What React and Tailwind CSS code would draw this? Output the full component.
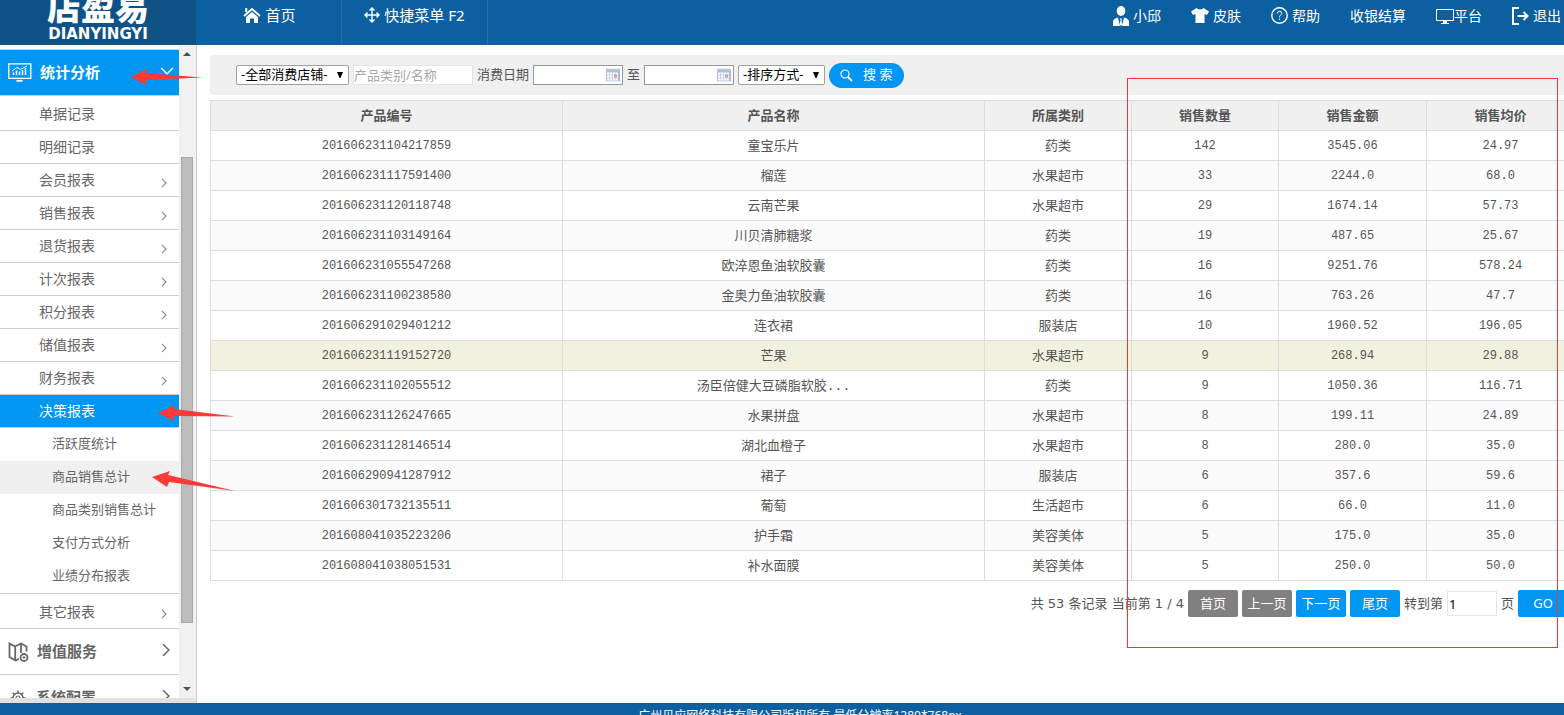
const MENU = [
  { label: '单据记录' },
  { label: '明细记录' },
  { label: '会员报表', more: true },
  { label: '销售报表', more: true },
  { label: '退货报表', more: true },
  { label: '计次报表', more: true },
  { label: '积分报表', more: true },
  { label: '储值报表', more: true },
  { label: '财务报表', more: true },
  {
    label: '决策报表',
    active: true,
    children: ['活跃度统计', '商品销售总计', '商品类别销售总计', '支付方式分析', '业绩分布报表'],
  },
]

const CURRENT = '商品销售总计'

const COLUMNS = [
  { label: '产品编号', width: 'w-[352px]' },
  { label: '产品名称', width: 'w-[422px]' },
  { label: '所属类别', width: 'w-[147px]' },
  { label: '销售数量', width: 'w-[147px]' },
  { label: '销售金额', width: 'w-[148px]' },
  { label: '销售均价', width: 'w-[148px]' },
]

const ROWS = [
  ['201606231104217859', '童宝乐片', '药类', '142', '3545.06', '24.97'],
  ['201606231117591400', '榴莲', '水果超市', '33', '2244.0', '68.0'],
  ['201606231120118748', '云南芒果', '水果超市', '29', '1674.14', '57.73'],
  ['201606231103149164', '川贝清肺糖浆', '药类', '19', '487.65', '25.67'],
  ['201606231055547268', '欧淬恩鱼油软胶囊', '药类', '16', '9251.76', '578.24'],
  ['201606231100238580', '金奥力鱼油软胶囊', '药类', '16', '763.26', '47.7'],
  ['201606291029401212', '连衣裙', '服装店', '10', '1960.52', '196.05'],
  ['201606231119152720', '芒果', '水果超市', '9', '268.94', '29.88'],
  ['201606231102055512', '汤臣倍健大豆磷脂软胶...', '药类', '9', '1050.36', '116.71'],
  ['201606231126247665', '水果拼盘', '水果超市', '8', '199.11', '24.89'],
  ['201606231128146514', '湖北血橙子', '水果超市', '8', '280.0', '35.0'],
  ['201606290941287912', '裙子', '服装店', '6', '357.6', '59.6'],
  ['201606301732135511', '葡萄', '生活超市', '6', '66.0', '11.0'],
  ['201608041035223206', '护手霜', '美容美体', '5', '175.0', '35.0'],
  ['201608041038051531', '补水面膜', '美容美体', '5', '250.0', '50.0'],
]

const HOVERED_ROW = 7

function Chevron({ className }) {
  return (
    <svg viewBox="0 0 12 12" fill="none" stroke="currentColor" className={className}>
      <path d="M3.500 1l5 5-5 5" strokeWidth="1.300" />
    </svg>
  )
}

function IconHome() {
  return (
    <svg width="18" height="17" viewBox="0 0 18 17" fill="none" stroke="#fff">
      <path d="M1 9l8-7 8 7" strokeWidth="2" />
      <path d="M3.200 1v4" strokeWidth="2" />
      <path d="M3 10l6-5 6 5v6h-4v-4.500H7V16H3z" fill="#fff" stroke="none" />
    </svg>
  )
}

function IconMove() {
  return (
    <svg width="16" height="16" viewBox="0 0 16 16" fill="none" stroke="#fff" strokeWidth="1.400">
      <path d="M8 1v14M1 8h14M5.500 3.500L8 1l2.500 2.500M5.500 12.500L8 15l2.500-2.500M3.500 5.500L1 8l2.500 2.500M12.500 5.500L15 8l-2.500 2.500" />
    </svg>
  )
}

function IconUser() {
  return (
    <svg width="16" height="20" viewBox="0 0 16 20" fill="#fff">
      <ellipse cx="8" cy="5" rx="4.300" ry="5" />
      <path d="M0 20v-4.500q0-2.500 5-4l2 8.500zM16 20v-4.500q0-2.500-5-4L9 20zM7 12.500h2l-.5 2 .8 4L8 20l-1.300-1.500.8-4z" />
    </svg>
  )
}

function IconShirt() {
  return (
    <svg width="18" height="15" viewBox="0 0 18 15" fill="#fff">
      <path d="M5.500 0Q9 3 12.500 0L18 3.500 16 7l-2.500-1v9h-9V6L2 7 0 3.500z" />
    </svg>
  )
}

function IconHelp() {
  return (
    <svg width="17" height="17" viewBox="0 0 17 17" fill="none" stroke="#fff">
      <circle cx="8.500" cy="8.500" r="7.700" strokeWidth="1.400" />
      <path d="M6.300 6.500q0-2.200 2.200-2.200t2.200 2q0 1.200-1.200 1.900t-1 2M8.500 11.500v1.300" />
    </svg>
  )
}

function IconMonitor() {
  return (
    <svg width="18" height="16" viewBox="0 0 18 16" fill="none" stroke="#fff">
      <path d="M.5 1.500h17v11H.5z" />
      <path d="M7 13h4v2h2v1H5v-1h2z" fill="#fff" stroke="none" />
    </svg>
  )
}

function IconExit() {
  return (
    <svg width="17" height="18" viewBox="0 0 17 18" fill="none" stroke="#fff" strokeWidth="2">
      <path d="M7 1H1v16h6" />
      <path d="M5.500 9H15M11.500 5l4 4-4 4" />
    </svg>
  )
}

function IconStats() {
  return (
    <svg width="24" height="19" viewBox="0 0 24 19" fill="none" stroke="#fff">
      <path d="M.8.8h22v14.500H.8z" strokeWidth="1.300" />
      <path d="M5.500 12V9.500M8.500 12V7.500M11.500 12V8.500M14.500 12V7M17.500 12V5" strokeWidth="1.500" />
      <path d="M4 8l5-3.500 3.500 2L19 3" strokeWidth="1" />
      <path d="M8.500 17.800h6" strokeWidth="1.800" />
    </svg>
  )
}

function IconMap() {
  return (
    <svg width="21" height="20" viewBox="0 0 21 20" fill="none" stroke="currentColor" strokeWidth="1.800">
      <path d="M11 17l-3.500 1.500-6-3.500V1.500l5.500 3 6-3 5.500 3v5M7.200 4.500v14M13 1.500V11" />
      <circle cx="16" cy="15.500" r="3.500" />
      <path d="M16 14v3M14.500 15.500h3" strokeWidth="1" />
    </svg>
  )
}

function IconGear() {
  return (
    <svg width="16" height="16" viewBox="0 0 16 16" fill="none" stroke="currentColor" strokeWidth="1.500">
      <circle cx="8" cy="8" r="5" />
      <circle cx="8" cy="8" r="2" strokeWidth="1.200" />
      <path d="M8 .5V3M8 13v2.500M.5 8H3M13 8h2.500M2.700 2.700l1.800 1.800M11.500 11.500l1.800 1.800M2.700 13.300l1.800-1.800M11.500 4.500l1.800-1.800" />
    </svg>
  )
}

function IconCalendar() {
  return (
    <svg
      width="14"
      height="13"
      viewBox="0 0 14 13"
      className="pointer-events-none absolute top-1/2 right-[3px] -translate-y-1/2"
    >
      <path d="M0 1h14v12H0z" fill="#a3bbe8" />
      <path d="M0 0h14v3H0z" fill="#b7c4d6" />
      <path d="M1 4h11v8H1z" fill="#fff" />
      <path d="M1 6.500h11M1 9.500h11M3.500 4v8M6.500 4v8M9.500 4v8" stroke="#c5d3ee" />
      <path d="M8 6h3v3H8z" fill="#f3977f" />
    </svg>
  )
}

function Select({ label, width }) {
  return (
    <span className={`relative ${width}`}>
      <select
        aria-label={label}
        className="block h-5 w-full appearance-none rounded-[2px] border border-[#a0a0a0] bg-white pb-0.5 pl-1 text-[13px] leading-4 text-black"
      >
        <option>{label}</option>
      </select>
      <svg width="6" height="6" viewBox="0 0 6 6" className="pointer-events-none absolute top-[7px] right-1.5">
        <path d="M0 0h6L3.500 6h-1z" />
      </svg>
    </span>
  )
}

function DateInput({ id, label }) {
  return (
    <span className="relative w-[90px]">
      <input id={id} aria-label={label} className="block h-5 w-full border border-[#999] bg-white px-1 text-[13px]" />
      <IconCalendar />
    </span>
  )
}

function Header() {
  const links = [
    { label: '小邱', icon: <IconUser /> },
    { label: '皮肤', icon: <IconShirt /> },
    { label: '帮助', icon: <IconHelp /> },
    { label: '收银结算' },
    { label: '平台', icon: <IconMonitor />, tight: true },
    { label: '退出', icon: <IconExit /> },
  ]
  return (
    <header className="flex h-[45px] shrink-0 overflow-hidden bg-[#0d60a0] text-white">
      <div className="flex w-[196px] flex-col items-center justify-end gap-[3px] bg-[#0f5286] pb-1">
        <span className="text-[34px] leading-[34px] font-black">店盈易</span>
        <span className="font-['DejaVu_Sans'] text-[15px] leading-[14px] font-bold">DIANYINGYI</span>
      </div>
      <nav className="flex text-[15px]">
        <a href="#" className="flex h-full w-[146px] items-start justify-center border-r border-[#2570ab] pl-0.5">
          <span className="flex h-[30px] items-center gap-1">
            <IconHome />
            首页
          </span>
        </a>
        <a href="#" className="flex h-full w-[146px] items-start justify-center border-r border-[#2570ab]">
          <span className="flex h-[30px] items-center gap-1">
            <IconMove />
            快捷菜单 F2
          </span>
        </a>
      </nav>
      <nav className="ml-auto flex h-[31px] items-center gap-[30px] pr-[3px] text-sm">
        {links.map((l) => (
          <a key={l.label} href="#" className={`flex items-center whitespace-nowrap ${l.tight ? '' : 'gap-1'}`}>
            {l.icon}
            {l.label}
          </a>
        ))}
      </nav>
    </header>
  )
}

function Sidebar() {
  return (
    <aside className="flex w-[197px] shrink-0 flex-col border-r border-[#ccc]">
      <div className="flex min-h-0 flex-1">
        <nav className="min-w-0 flex-1 overflow-hidden pt-1 text-sm text-[#666]">
          <a
            href="#"
            className="flex h-[47px] items-center border-y border-[#ccc] bg-[#0096f2] pr-[5px] pl-2 text-[15px] font-bold text-white"
          >
            <IconStats />
            <span className="ml-2">统计分析</span>
            <Chevron className="mb-1 ml-auto size-3.5 rotate-90" />
          </a>
          <ul className="pt-0.5">
            {MENU.map((m) => (
              <li key={m.label}>
                <a
                  href="#"
                  className={`flex h-[33px] items-center border-b border-[#ccc] pr-2.5 pl-[39px] ${m.active ? 'bg-[#0096f2] text-white' : ''}`}
                >
                  {m.label}
                  {m.more && <Chevron className="mt-1.5 ml-auto size-2.5 text-[#888]" />}
                </a>
                {m.children && (
                  <ul className="border-b border-[#ccc] text-[13px]">
                    {m.children.map((c) => (
                      <li key={c}>
                        <a
                          href="#"
                          className={`flex h-[33px] items-center pb-0.5 pl-[52px] ${c === CURRENT ? 'bg-[#f0f0f0]' : ''}`}
                        >
                          {c}
                        </a>
                      </li>
                    ))}
                  </ul>
                )}
              </li>
            ))}
          </ul>
          <a href="#" className="flex h-[35px] items-center border-b border-[#ccc] pt-0.5 pr-2.5 pl-[39px]">
            其它报表
            <Chevron className="mt-1 ml-auto size-2.5 text-[#888]" />
          </a>
          <a href="#" className="flex h-[46px] items-center border-b border-[#ccc] pr-1.5 pl-2 text-[15px] font-bold">
            <IconMap />
            <span className="ml-2">增值服务</span>
            <Chevron className="mb-1 ml-auto size-3.5" />
          </a>
          <a href="#" className="flex h-[46px] items-center pr-1.5 pl-2.5 text-[15px] font-bold">
            <IconGear />
            <span className="ml-2.5">系统配置</span>
            <Chevron className="mb-1 ml-auto size-3.5" />
          </a>
        </nav>
        <div className="flex w-[17px] flex-col items-center bg-[#f1f1f1] py-[7px] pr-px">
          <svg width="8" height="4" viewBox="0 0 8 4" className="shrink-0">
            <path d="M4 0l4 4H0z" fill="#505050" />
          </svg>
          <div className="flex w-full flex-1 flex-col px-0.5">
            <div className="flex-[101]" />
            <div className="flex-[467] border border-[#a8a8a8] bg-[#bcbcbc]" />
            <div className="flex-[64]" />
          </div>
          <svg width="8" height="4" viewBox="0 0 8 4" className="shrink-0">
            <path d="M0 0h8L4 4z" fill="#505050" />
          </svg>
        </div>
      </div>
      <div className="h-[5px] shrink-0 bg-[#e2e2e2]" />
    </aside>
  )
}

function FilterBar() {
  return (
    <form
      onSubmit={(e) => e.preventDefault()}
      className="flex h-10 items-center gap-1 rounded-l-[4px] bg-[#f0f0f0] pl-[26px] text-[13px] text-[#555]"
    >
      <Select label="-全部消费店铺-" width="w-[113px]" />
      <input
        aria-label="产品类别/名称"
        placeholder="产品类别/名称"
        className="h-5 w-[120px] border border-[#e5e5e5] bg-white placeholder:text-[#a9a9a9]"
      />
      <label htmlFor="from">消费日期</label>
      <DateInput id="from" />
      <label htmlFor="to">至</label>
      <DateInput id="to" />
      <Select label="-排序方式-" width="w-[87px]" />
      <button className="flex h-[25px] w-[75px] items-center rounded-full bg-[#0096f2] pl-[11px] text-white">
        <svg width="13" height="13" viewBox="0 0 13 13" fill="none" stroke="currentColor">
          <circle cx="5" cy="5" r="4" strokeWidth="1.200" />
          <path d="M8 8l4 4" strokeWidth="2" />
        </svg>
        <span className="ml-2.5">搜 索</span>
      </button>
    </form>
  )
}

function SalesTable() {
  return (
    <table className="mt-[5px] w-full table-fixed border-collapse text-center text-[#555]">
      <thead>
        <tr className="h-[30px] bg-[#f0f0f0] text-[13px]">
          {COLUMNS.map((c) => (
            <th key={c.label} className={`border border-[#ddd] px-0 pt-0 pb-0.5 leading-5 font-bold ${c.width}`}>
              {c.label}
            </th>
          ))}
        </tr>
      </thead>
      <tbody>
        {ROWS.map((row, i) => (
          <tr
            key={row[0]}
            className={`h-[30px] ${i === HOVERED_ROW ? 'bg-[#f0f2df]' : i % 2 ? 'bg-[#fbfbfb]' : 'bg-white'}`}
          >
            {row.map((cell, j) => (
              <td
                key={j}
                className={`border border-[#ddd] px-0 pb-0 leading-5 font-['Liberation_Mono','Noto_Sans_CJK_SC',monospace] ${j === 1 || j === 2 ? 'pt-0.5 text-[13px]' : 'pt-0 text-xs'}`}
              >
                {cell}
              </td>
            ))}
          </tr>
        ))}
      </tbody>
    </table>
  )
}

function Pagination() {
  const buttons = [
    { label: '首页', disabled: true },
    { label: '上一页', disabled: true },
    { label: '下一页' },
    { label: '尾页' },
  ]
  return (
    <div className="mt-[9px] flex items-center justify-end gap-1 pr-1.5 text-[13px] whitespace-nowrap text-[#555]">
      <span className="font-['DejaVu_Sans','Noto_Sans_CJK_SC',sans-serif]">共 53 条记录 当前第 1 / 4</span>
      {buttons.map((b) => (
        <button
          key={b.label}
          disabled={b.disabled}
          className={`h-[27px] w-[50px] rounded-[2px] text-white ${b.disabled ? 'bg-[#808080]' : 'bg-[#0096f2]'}`}
        >
          {b.label}
        </button>
      ))}
      <label htmlFor="page">转到第</label>
      <input id="page" defaultValue="1" className="h-[25px] w-[50px] border border-[#e5e5e5] px-px text-black" />
      <span>页</span>
      <button className="h-[27px] w-[50px] rounded-[2px] bg-[#0096f2] text-white">GO</button>
    </div>
  )
}

function RedArrow({ className, points }) {
  return (
    <svg width="84" height="24" viewBox="0 0 84 24" className={`pointer-events-none absolute ${className}`}>
      <polygon points={points} fill="#fd3a36" />
    </svg>
  )
}

export default function App() {
  return (
    <div className="relative flex h-screen flex-col overflow-hidden bg-white font-['Noto_Sans','Noto_Sans_CJK_SC',sans-serif]">
      <Header />
      <div className="flex min-h-0 flex-1">
        <Sidebar />
        <main className="min-w-0 flex-1 overflow-hidden pt-2.5 pl-[13px]">
          <div className="-mr-2.5">
            <FilterBar />
            <SalesTable />
            <Pagination />
          </div>
        </main>
      </div>
      <footer className="h-3 shrink-0 overflow-hidden bg-[#0d60a0] pt-[5px] pl-9 text-center text-xs text-white">
        广州贝应网络科技有限公司版权所有 最低分辨率1280*768px
      </footer>

      <RedArrow className="top-[65px] left-[130px]" points="1,12 17,4 16,8 72,12.500 16,15 16,20" />
      <RedArrow className="top-[401px] left-[157px]" points="1,12 18,4 17,8 78,15.500 17,15 17,20" />
      <RedArrow className="top-[468px] left-[151px]" points="1,9 19,3 17,7 84,23 18,14 16,19" />
      <div className="pointer-events-none absolute top-[78px] right-[6px] h-[570px] w-[431px] border border-[#f33]" />
    </div>
  )
}
